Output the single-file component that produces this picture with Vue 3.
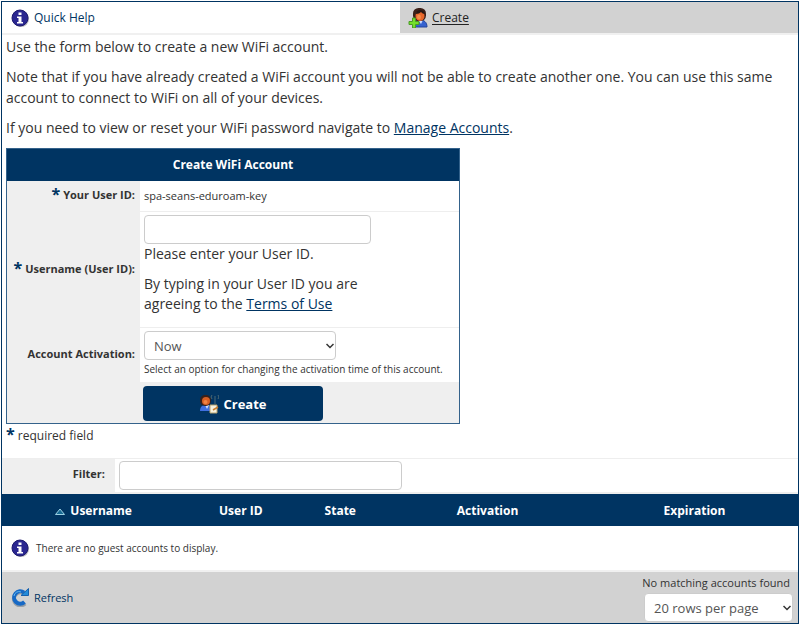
<template>
  <div class="guest-page">
    <nav class="tabs">
      <div class="tab">
        <a href="#" class="tab-link">
          <svg class="icon" viewBox="0 0 20 20" aria-hidden="true">
            <ellipse cx="11" cy="11" rx="8" ry="8" fill="#b9b9bd" />
            <circle cx="10" cy="10" r="8" fill="#2b2791" stroke="#1c1970" />
            <path d="M8.500 4.500h3v2.500h-3zM7 8.500h4.500v5.500h1.500v1.500h-6v-1.500h1.500v-4h-1.500z" fill="#fff" />
          </svg>
          <span>Quick Help</span>
        </a>
      </div>
      <div class="tab active">
        <a href="#" class="tab-link">
          <svg class="icon" viewBox="0 0 20 20" aria-hidden="true">
            <path d="M6 19c0-5 2-7 6-7s7 2 7 7z" fill="#3562cf" stroke="#24449a" />
            <path d="M10 12l3 4 2-4z" fill="#c9dcff" />
            <rect x="5" y="0" width="13" height="13" rx="5.500" fill="#3b2019" />
            <ellipse cx="12" cy="8" rx="4.500" ry="5" fill="#e8672b" />
            <ellipse cx="11" cy="9" rx="2" ry="2.500" fill="#f58a45" />
            <path d="M8 6c2 0 4-1 5-2 1 1 2 2 4 2-1-3-3-4-5-4S8 3 8 6z" fill="#281713" />
            <path d="M4.500 10h3v3.500H11v3H7.500V20h-3v-3.500H1v-3h3.500z" fill="#73df2b" stroke="#4a9b26" />
          </svg>
          <span>Create</span>
        </a>
      </div>
    </nav>

    <section class="intro">
      <p>Use the form below to create a new WiFi account.</p>
      <p>Note that if you have already created a WiFi account you will not be able to create another one. You can use this same account to connect to WiFi on all of your devices.</p>
      <p>If you need to view or reset your WiFi password navigate to <a href="#">Manage Accounts</a>.</p>
    </section>

    <form class="account-form" @submit.prevent>
      <h2>Create WiFi Account</h2>
      <div class="form-row user-row">
        <div class="label"><span class="star">*</span> Your User ID:</div>
        <div class="field user-id">spa-seans-eduroam-key</div>
      </div>
      <div class="form-row username-row">
        <label class="label" for="username"><span class="star">*</span> Username (User ID):</label>
        <div class="field">
          <input id="username" v-model="username" type="text" class="username-input" />
          <div class="help">
            <p>Please enter your User ID.</p>
            <p>By typing in your User ID you are agreeing to the <a href="#">Terms of Use</a></p>
          </div>
        </div>
      </div>
      <div class="form-row">
        <label class="label" for="activation">Account Activation:</label>
        <div class="field activation-field">
          <div class="select-wrap activation-select">
            <select id="activation" v-model="activation">
              <option>Now</option>
            </select>
            <svg class="chevron" viewBox="0 0 8 6" aria-hidden="true"><path d="M0.500 1l3.500 3.500L7.500 1" /></svg>
          </div>
          <div class="hint">Select an option for changing the activation time of this account.</div>
        </div>
      </div>
      <div class="form-row">
        <div class="label"></div>
        <div class="submit-field">
          <button type="submit">
            <svg class="icon" viewBox="0 0 20 20" aria-hidden="true">
              <path d="M1 17c0-4 2-6 6-6s6 2 6 6z" fill="#3f6fe0" />
              <path d="M6 11l2 4 2-4z" fill="#cfe0ff" />
              <rect x="1" y="1" width="11" height="11" rx="5" fill="#3a211a" />
              <ellipse cx="7" cy="7" rx="4" ry="4" fill="#d95f24" />
              <ellipse cx="6.500" cy="8" rx="2" ry="2" fill="#f08443" />
              <path d="M16 2v8M13 1l-1 2 1 2M19 1l1 2-1 2" fill="none" stroke="#4c6874" />
              <path d="M11 11h7v8h-7z" fill="#f6f2df" stroke="#b9a36d" />
              <path d="M14 16l5-3" fill="none" stroke="#ca7e2e" stroke-width="1.500" />
            </svg>
            <span>Create</span>
          </button>
        </div>
      </div>
    </form>
    <div class="required"><span class="star">*</span> required field</div>

    <div class="filter-row">
      <label for="filter">Filter:</label>
      <div class="filter-field">
        <input id="filter" v-model="filter" type="text" />
      </div>
    </div>

    <table class="accounts">
      <thead>
        <tr>
          <th v-for="column in columns" :key="column.name" :class="column.key">
            <svg v-if="column.key === 'username'" class="sort" viewBox="0 0 10 7" aria-hidden="true">
              <path d="M5 1L9.500 6.500h-9z" fill="#176a94" stroke="#9cd0e4" />
            </svg>
            {{ column.name }}
          </th>
        </tr>
      </thead>
      <tbody>
        <tr>
          <td colspan="5">
            <div class="empty">
              <svg class="icon" viewBox="0 0 20 20" aria-hidden="true">
                <ellipse cx="11" cy="11" rx="8" ry="8" fill="#b9b9bd" />
                <circle cx="10" cy="10" r="8" fill="#2b2791" stroke="#1c1970" />
                <path d="M8.500 4.500h3v2.500h-3zM7 8.500h4.500v5.500h1.500v1.500h-6v-1.500h1.500v-4h-1.500z" fill="#fff" />
              </svg>
              <span>There are no guest accounts to display.</span>
            </div>
          </td>
        </tr>
      </tbody>
    </table>

    <footer>
      <a href="#" class="refresh">
        <svg class="icon" viewBox="0 0 20 20" aria-hidden="true">
          <path d="M15 16.500A6.500 6.500 0 1 1 14 6.500" fill="none" stroke="#999fa5" stroke-width="4" />
          <path d="M14.500 15A6.200 6.200 0 1 1 14 5.500" fill="none" stroke="#1769c5" stroke-width="4" />
          <path d="M11 8.500h7.500v-7z" fill="#238bd9" stroke="#1761ad" />
          <path d="M4 9a5 5 0 0 1 7-4" fill="none" stroke="#67b9ef" />
        </svg>
        <span>Refresh</span>
      </a>
      <div class="paging">
        <label for="rows">No matching accounts found</label>
        <div class="select-wrap rows-select">
          <select id="rows" v-model="rows">
            <option>20 rows per page</option>
          </select>
          <svg class="chevron" viewBox="0 0 8 6" aria-hidden="true"><path d="M0.500 1l3.500 3.500L7.500 1" /></svg>
        </div>
      </div>
    </footer>
  </div>
</template>

<script setup>
import { ref } from 'vue';

const username = ref('');
const activation = ref('Now');
const filter = ref('');
const rows = ref('20 rows per page');

const columns = [
  { key: 'username', name: 'Username' },
  { key: 'user-id-column', name: 'User ID' },
  { key: 'state', name: 'State' },
  { key: 'activation', name: 'Activation' },
  { key: 'expiration', name: 'Expiration' }
];
</script>

<style>
body {
  margin: 0;
  background: #fff;
}
</style>

<style scoped>
* {
  box-sizing: border-box;
}

.guest-page {
  margin: 1px;
  border: 1px solid #003462;
  font: 14px/21px 'Open Sans', 'Noto Sans', sans-serif;
  color: #333;
}

a {
  color: #003462;
}

p {
  margin: 0 0 9px;
}

.icon {
  width: 20px;
  height: 20px;
  flex: none;
}

.tabs {
  display: flex;
  border-bottom: 2px solid #f0f0f0;
}

.tab {
  flex: 1;
  height: 31px;
  padding: 0 8px;
  display: flex;
  align-items: center;
}

.tab.active {
  background: #d2d2d2;
}

.tab-link, .refresh {
  display: flex;
  align-items: center;
  gap: 4px;
  font-size: 11px;
  text-decoration: none;
}

.tab-link {
  font-size: 12px;
}

.active .tab-link {
  color: #222;
}

.active span {
  text-decoration: underline;
  text-underline-offset: 2px;
}

.intro {
  padding: 1px 4px;
}

.account-form {
  width: 454px;
  margin-left: 4px;
  border: 1px solid #34628b;
}

h2 {
  margin: 0;
  background: #003462;
  color: #fff;
  font-size: 12px;
  line-height: 32px;
  text-align: center;
}

.form-row {
  display: flex;
}

.label {
  width: 133px;
  flex: none;
  padding-right: 5px;
  padding-bottom: 4px;
  background: #efefef;
  font-size: 11px;
  font-weight: bold;
  white-space: nowrap;
  display: flex;
  align-items: center;
  justify-content: flex-end;
  gap: 3px;
}

.star {
  color: #003462;
  font-size: 16px;
  font-weight: bold;
}

.field {
  flex: 1;
  padding: 3px 4px;
  border-bottom: 1px solid #eee;
}

.user-id {
  font-size: 11px;
  line-height: 24px;
}

.username-row .field {
  height: 116px;
}

input, select {
  display: block;
  height: 29px;
  border: 1px solid #ccc;
  border-radius: 4px;
  background: #fff;
  font: 13px 'Open Sans', 'Noto Sans', sans-serif;
  color: #555;
}

.username-input {
  width: 227px;
}

.help {
  width: 227px;
  line-height: 20px;
}

.help p {
  margin-bottom: 10px;
}

.activation-field {
  padding-bottom: 0;
  border-bottom: none;
}

.select-wrap {
  position: relative;
}

.activation-select {
  width: 192px;
}

select {
  width: 100%;
  padding: 0 9px;
  appearance: none;
}

.chevron {
  position: absolute;
  right: 2px;
  top: 12px;
  width: 8px;
  height: 6px;
  fill: none;
  stroke: #333;
  stroke-width: 1.5;
}

.hint {
  padding-bottom: 4px;
  font-size: 10px;
  line-height: 18px;
  white-space: nowrap;
}

.submit-field {
  flex: 1;
  padding: 4px 3px 2px;
  background: #efefef;
}

button {
  display: flex;
  align-items: center;
  justify-content: center;
  gap: 4px;
  width: 180px;
  height: 35px;
  padding: 0;
  border: none;
  border-radius: 4px;
  background: #003462;
  color: #fff;
  font: bold 13px 'Open Sans', 'Noto Sans', sans-serif;
}

.required {
  padding-left: 4px;
  font-size: 12px;
}

.filter-row {
  display: flex;
  margin-top: 12px;
  border-top: 1px solid #eee;
  border-bottom: 2px solid #eee;
}

.filter-row label {
  width: 113px;
  padding: 4px 10px 0 0;
  background: #efefef;
  font-size: 11px;
  font-weight: bold;
  text-align: right;
}

.filter-field {
  flex: 1;
  padding: 2px 4px;
}

.filter-field input {
  width: 283px;
}

.accounts {
  width: 100%;
  border-spacing: 0;
  table-layout: fixed;
}

th {
  height: 32px;
  padding: 0;
  background: #003462;
  color: #fff;
  font-size: 12px;
  text-align: center;
}

.username {
  width: 23%;
}

.user-id-column {
  width: 14%;
}

.state {
  width: 11%;
}

.activation {
  width: 26%;
}

.sort {
  width: 10px;
  height: 7px;
  margin-right: 2px;
}

td {
  height: 46px;
  padding: 0 8px;
  border-bottom: 2px solid #f0f0f0;
}

.empty {
  display: flex;
  align-items: center;
  gap: 6px;
  font-size: 10px;
}

footer {
  display: flex;
  align-items: center;
  justify-content: space-between;
  padding: 0 5px 1px 8px;
  background: #d2d2d2;
}

.paging {
  display: flex;
  flex-direction: column;
  align-items: flex-end;
  font-size: 11px;
}

.paging label {
  padding-right: 3px;
}

.rows-select {
  width: 149px;
}
</style>
